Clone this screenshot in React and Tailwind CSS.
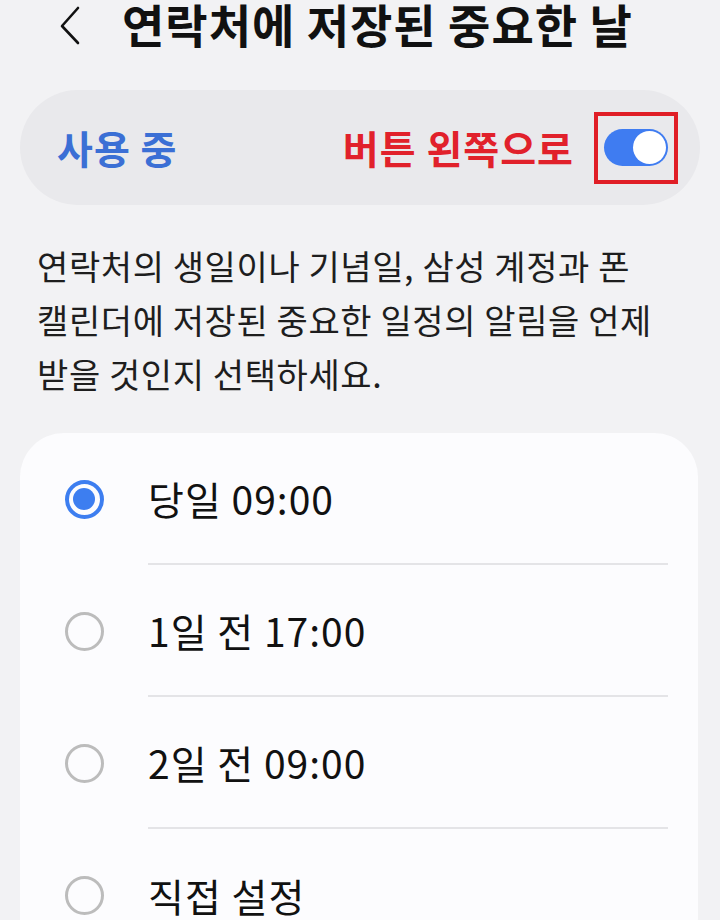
export default function App() {
  const options = [
    { label: '당일 09:00', checked: true },
    { label: '1일 전 17:00', checked: false },
    { label: '2일 전 09:00', checked: false },
    { label: '직접 설정', checked: false },
  ]

  return (
    <div
      className="w-[720px] h-[920px] overflow-hidden bg-[#f2f2f4]"
      style={{ fontFamily: '"Noto Sans CJK KR", "Noto Sans", sans-serif' }}
    >
      {/* header */}
      <div className="h-[54px] flex items-center pl-[58px]">
        <svg width="24" height="40" viewBox="0 0 24 40" fill="none" className="mt-[-4px]">
          <path d="M20 3 L4 21 L20 38" stroke="#111" strokeWidth="2.6" strokeLinecap="round" strokeLinejoin="round" />
        </svg>
        <h1 className="ml-[40px] text-[46px] font-bold text-[#111] leading-none tracking-[1px] mt-[-8px]">
          연락처에 저장된 중요한 날
        </h1>
      </div>

      {/* master switch */}
      <div className="mx-[20px] mt-[36px] h-[115px] rounded-[58px] bg-[#e9e9ec] flex items-center pl-[37px] pr-[22px]">
        <span className="text-[39px] font-bold text-[#3b6fd5] leading-none tracking-[1px]">사용 중</span>
        <span className="ml-auto text-[39px] font-bold text-[#e1212b] leading-none tracking-[1px]">버튼 왼쪽으로</span>
        <div className="ml-[20px] w-[84px] h-[72px] border-[4px] border-[#e01e26] flex items-center justify-center">
          <div className="w-[64px] h-[37px] rounded-full bg-[#3f7cf1] flex items-center justify-end pr-[2px]">
            <div className="w-[33px] h-[33px] rounded-full bg-white" />
          </div>
        </div>
      </div>

      {/* description */}
      <p className="px-[37px] mt-[34px] text-[34px] leading-[54px] text-[#1e1e1e] tracking-[0.6px] whitespace-nowrap">
        연락처의 생일이나 기념일, 삼성 계정과 폰<br />
        캘린더에 저장된 중요한 일정의 알림을 언제<br />
        받을 것인지 선택하세요.
      </p>

      {/* options */}
      <div className="mx-[20px] mt-[32px] rounded-[44px] bg-[#fcfcfe] w-[678px]">
        {options.map((o, i) => (
          <div key={i} className="flex h-[132px]">
            <div className="w-[128px] flex items-center justify-center">
              {o.checked ? (
                <div className="w-[39px] h-[39px] rounded-full border-[4px] border-[#3d7ef0] flex items-center justify-center">
                  <div className="w-[22px] h-[22px] rounded-full bg-[#3d7ef0]" />
                </div>
              ) : (
                <div className="w-[39px] h-[39px] rounded-full border-[3px] border-[#bcbcbc]" />
              )}
            </div>
            <div className={`flex-1 mr-[30px] flex items-center ${i < options.length - 1 ? 'border-b-2 border-[#e4e4e7]' : ''}`}>
              <span className="text-[39px] text-[#111] leading-none tracking-[1px]">{o.label}</span>
            </div>
          </div>
        ))}
      </div>
    </div>
  )
}
